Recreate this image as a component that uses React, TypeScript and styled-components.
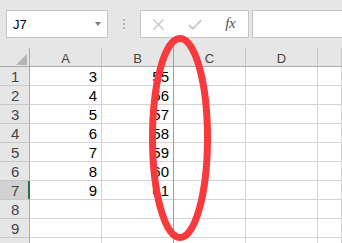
import React from "react";
import styled, { createGlobalStyle } from "styled-components";

const Global = createGlobalStyle`
  html, body { margin: 0; padding: 0; background: #e6e6e6; overflow: hidden; }
  body { font-family: "Liberation Sans", Arial, sans-serif; }
`;

const Page = styled.div`
  position: relative;
  width: 342px;
  height: 243px;
  overflow: hidden;
  background: #e6e6e6;
`;

const Toolbar = styled.div`
  display: flex;
  align-items: flex-start;
  height: 48px;
  box-sizing: border-box;
  padding: 10px 0 0 6px;
`;

const NameBox = styled.div`
  box-sizing: border-box;
  width: 102px;
  height: 28px;
  background: #fff;
  border: 1px solid #c6c6c6;
  display: flex;
  align-items: center;
  justify-content: space-between;
  padding: 1px 6px 0 6px;
  font-size: 13px;
  color: #000;
`;

const Caret = styled.span`
  width: 0;
  height: 0;
  border-left: 3.5px solid transparent;
  border-right: 3.5px solid transparent;
  border-top: 4px solid #7a7a7a;
  margin-top: -1px;
`;

const Grip = styled.div`
  width: 32px;
  height: 28px;
  display: flex;
  flex-direction: column;
  align-items: center;
  justify-content: center;
  gap: 2.4px;
`;

const GripDot = styled.span`
  width: 2px;
  height: 2px;
  background: #b4b4b4;
`;

const FuncBox = styled.div`
  box-sizing: border-box;
  width: 109px;
  height: 28px;
  background: #fff;
  border: 1px solid #c6c6c6;
  display: flex;
  align-items: center;
`;

const FuncSlot = styled.div`
  flex: 1;
  display: flex;
  align-items: center;
  justify-content: center;
  height: 100%;
`;

const FxText = styled.span`
  font-family: "Liberation Serif", "Times New Roman", serif;
  font-style: italic;
  font-size: 15px;
  color: #555;
  letter-spacing: -0.5px;
  margin-top: -1px;
`;

const FormulaInput = styled.div`
  box-sizing: border-box;
  flex: 1;
  height: 28px;
  margin-left: 3px;
  margin-right: -2px;
  background: #fff;
  border: 1px solid #c6c6c6;
`;

const Sheet = styled.div`
  display: grid;
  grid-template-columns: 30px 72px 72px 72px 72px 1fr;
  grid-auto-rows: 19px;
  background: #fff;
`;

const Corner = styled.div`
  box-sizing: border-box;
  position: relative;
  background: #e6e6e6;
  border-right: 1px solid #ababab;
  border-bottom: 1px solid #ababab;
  display: flex;
  align-items: flex-end;
  justify-content: flex-end;
  padding: 0 2px 1px 0;
`;

const CornerTri = styled.span`
  width: 0;
  height: 0;
  border-left: 11px solid transparent;
  border-bottom: 11px solid #b4b4b4;
`;

const ColHead = styled.div`
  box-sizing: border-box;
  background: #e6e6e6;
  border-right: 1px solid #c4c4c4;
  border-bottom: 1px solid #ababab;
  text-align: center;
  font-size: 13px;
  line-height: 14px;
  padding-top: 4px;
  color: #444;
  overflow: hidden;
`;

const RowHead = styled.div<{ $selected?: boolean }>`
  box-sizing: border-box;
  background: ${(p) => (p.$selected ? "#d2d2d2" : "#e6e6e6")};
  border-right: 1px solid ${(p) => (p.$selected ? "#217346" : "#ababab")};
  box-shadow: ${(p) => (p.$selected ? "inset -1px 0 0 #217346" : "none")};
  border-bottom: 1px solid #c8c8c8;
  font-size: 15px;
  line-height: 18px;
  padding: 1px 0 0 11px;
  color: #444;
  overflow: hidden;
`;

const Cell = styled.div`
  box-sizing: border-box;
  border-right: 1px solid #d4d4d4;
  border-bottom: 1px solid #d4d4d4;
  font-size: 15px;
  line-height: 18px;
  padding: 1px 4px 0 0;
  text-align: right;
  color: #000;
  overflow: hidden;
  white-space: nowrap;
`;

const Overlay = styled.svg`
  position: absolute;
  left: 0;
  top: 0;
  pointer-events: none;
`;

const columns = ["A", "B", "C", "D", ""];
const rows: { n: string; a?: number; b?: number }[] = [
  { n: "1", a: 3, b: 55 },
  { n: "2", a: 4, b: 56 },
  { n: "3", a: 5, b: 57 },
  { n: "4", a: 6, b: 58 },
  { n: "5", a: 7, b: 59 },
  { n: "6", a: 8, b: 60 },
  { n: "7", a: 9, b: 61 },
  { n: "8" },
  { n: "9" },
  { n: "" },
];

export default function App() {
  return (
    <Page>
      <Global />
      <Toolbar>
        <NameBox>
          <span>J7</span>
          <Caret />
        </NameBox>
        <Grip>
          <GripDot />
          <GripDot />
          <GripDot />
        </Grip>
        <FuncBox>
          <FuncSlot>
            <svg width="11" height="11" viewBox="0 0 11 11">
              <path d="M0.5 0.5 L10.5 10.5 M10.5 0.5 L0.5 10.5" stroke="#c6c6c6" strokeWidth="1.4" fill="none" />
            </svg>
          </FuncSlot>
          <FuncSlot>
            <svg width="14" height="11" viewBox="0 0 14 11">
              <path d="M0.8 5.8 L4.8 9.8 L13.2 1.2" stroke="#c6c6c6" strokeWidth="1.8" fill="none" />
            </svg>
          </FuncSlot>
          <FuncSlot>
            <FxText>fx</FxText>
          </FuncSlot>
        </FuncBox>
        <FormulaInput />
      </Toolbar>
      <Sheet>
        <Corner>
          <CornerTri />
        </Corner>
        {columns.map((c, i) => (
          <ColHead key={i}>{c}</ColHead>
        ))}
        {rows.map((r, i) => (
          <React.Fragment key={i}>
            <RowHead $selected={r.n === "7"}>{r.n}</RowHead>
            <Cell>{r.a ?? ""}</Cell>
            <Cell>{r.b ?? ""}</Cell>
            <Cell />
            <Cell />
            <Cell />
          </React.Fragment>
        ))}
      </Sheet>
      <Overlay width="342" height="243" viewBox="0 0 342 243">
        <line x1="173.5" y1="46" x2="173.5" y2="243" stroke="#9e9e9e" strokeWidth="1" />
        <ellipse cx="180" cy="138" rx="27.5" ry="99.5" fill="none" stroke="#f93a3c" strokeWidth="7" />
      </Overlay>
    </Page>
  );
}
